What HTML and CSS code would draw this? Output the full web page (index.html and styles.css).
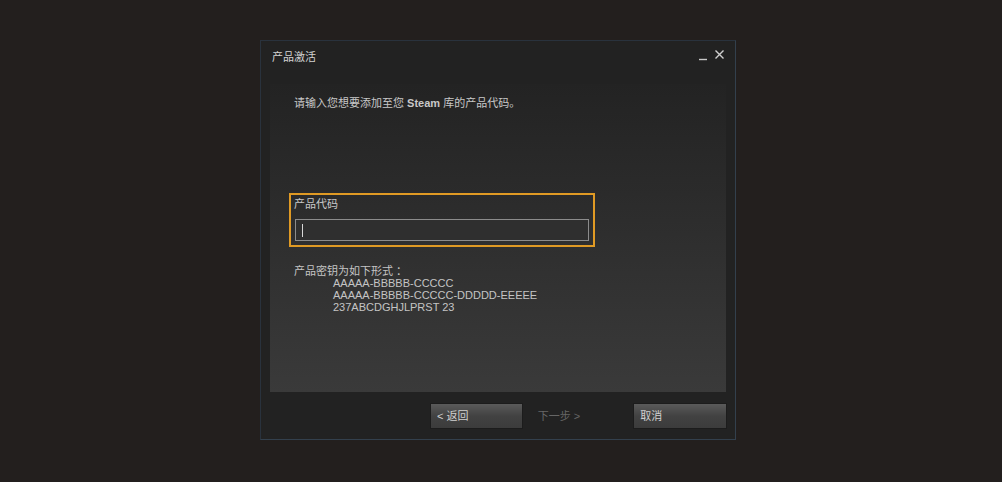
FILE: index.html
```html
<!DOCTYPE html>
<html lang="zh">
<head>
<meta charset="utf-8">
<title>产品激活</title>
<link rel="stylesheet" href="styles.css">
</head>
<body>
<div class="dialog">
  <div class="titlebar">
    <span class="title">产品激活</span>
    <div class="controls">
      <svg class="ctl" width="10" height="12" viewBox="0 0 10 12"><path d="M1 10.5H9" stroke="#c8c8c8" stroke-width="1.4"/></svg>
      <svg class="ctl" width="11" height="12" viewBox="0 0 11 12"><path d="M1.5 1.5L9.5 9.5M9.5 1.5L1.5 9.5" stroke="#d0d0d0" stroke-width="1.4"/></svg>
    </div>
  </div>
  <div class="panel">
    <p class="intro">请输入您想要添加至您 <b>Steam</b> 库的产品代码。</p>
    <div class="codebox">
      <div class="label">产品代码</div>
      <div class="input"><span class="caret"></span></div>
    </div>
    <div class="format">
      <div>产品密钥为如下形式 ：</div>
      <div class="code">AAAAA-BBBBB-CCCCC</div>
      <div class="code">AAAAA-BBBBB-CCCCC-DDDDD-EEEEE</div>
      <div class="code">237ABCDGHJLPRST 23</div>
    </div>
  </div>
  <div class="footer">
    <div class="btn back">&lt; 返回</div>
    <div class="btn next">下一步 &gt;</div>
    <div class="btn cancel">取消</div>
  </div>
</div>
</body>
</html>
```
FILE: styles.css
```css
html, body {
  margin: 0;
  padding: 0;
}
body {
  background: #231f1e;
  width: 1002px;
  height: 482px;
  overflow: hidden;
  font-family: "Liberation Sans", "Noto Sans CJK SC", sans-serif;
  font-size: 11px;
  color: #c4c4c4;
}
.dialog {
  margin: 40px 0 0 260px;
  width: 456px;
  height: 398px;
  border: 1px solid #29323d;
  border-bottom-color: #33404d;
  border-right-color: #33404d;
  background: #222222;
  display: flex;
  flex-direction: column;
  padding: 0 9px;
}
.titlebar {
  height: 43px;
  display: flex;
  align-items: flex-start;
  justify-content: space-between;
  padding-left: 2px;
}
.title {
  margin-top: 9px;
  line-height: 14px;
  color: #d2d2d2;
}
.controls {
  display: flex;
  gap: 6px;
  margin-top: 8px;
  margin-right: 1px;
}
.ctl {
  display: block;
}
.panel {
  height: 308px;
  background: linear-gradient(#232323 0%, #2c2c2c 40%, #3a3a3a 100%);
  padding: 12px 0 0 24px;
  box-sizing: border-box;
}
.intro {
  margin: 0;
  line-height: 14px;
  color: #c8c8c8;
}
.intro b {
  font-weight: bold;
}
.codebox {
  margin: 83px 0 0 -5px;
  width: 302px;
  border: 2px solid #e09a24;
  padding: 2px 0 4px 0;
}
.label {
  padding-left: 3px;
  line-height: 14px;
  color: #c8c8c8;
}
.input {
  margin: 8px 0 0 4px;
  width: 292px;
  height: 20px;
  border: 1px solid #8c8c8c;
  background: #2f2f2f;
  position: relative;
}
.caret {
  position: absolute;
  left: 6px;
  top: 4px;
  width: 1px;
  height: 13px;
  background: #d8d8d8;
}
.format {
  margin-top: 18px;
  line-height: 12px;
  color: #c4c4c4;
}
.code {
  padding-left: 39px;
}
.footer {
  display: flex;
  padding-top: 12px;
  padding-left: 161px;
}
.btn {
  width: 91px;
  height: 24px;
  line-height: 24px;
  box-sizing: border-box;
  padding-left: 6px;
  color: #d0d0d0;
  background: linear-gradient(#5a5a5a, #424242 50%, #3c3c3c);
  box-shadow: 0 0 0 1px #1c1c1c;
}
.next {
  background: none;
  box-shadow: none;
  color: #666666;
  margin-left: 10px;
  width: 92px;
}
.cancel {
  margin-left: 11px;
  width: 92px;
}
```
